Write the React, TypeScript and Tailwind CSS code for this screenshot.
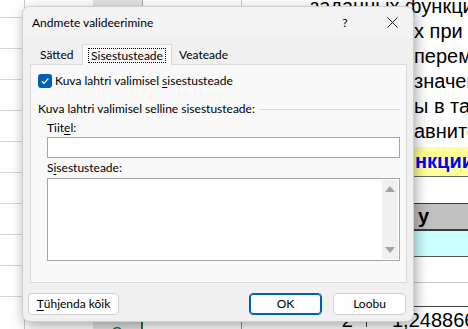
import React from 'react';

// Small access-key underline helper
const U = ({ children }: { children: React.ReactNode }) => (
    <span className="underline underline-offset-2">{children}</span>
);

const UpArrow = () => (
    <svg width="10" height="6" viewBox="0 0 10 6"><path d="M0 6 L5 0 L10 6 Z" fill="#a3a3a3" /></svg>
);
const DownArrow = () => (
    <svg width="10" height="6" viewBox="0 0 10 6"><path d="M0 0 L5 6 L10 0 Z" fill="#a3a3a3" /></svg>
);

// Spreadsheet behind the dialog
const SheetBackground = () => (
    <div className="absolute inset-0 bg-white">
        {/* left gridlines */}
        <div className="absolute left-0 top-0 w-[30px] flex flex-col">
            <div className="h-[18px] border-b border-[#d6d6d6]" />
            {[...Array(9)].map((_, i) => (
                <div key={i} className="h-[31px] border-b border-[#d6d6d6]" />
            ))}
        </div>
        {/* column header strip on top */}
        <div className="absolute left-0 top-0 w-[310px] h-[8px] flex">
            <div className="w-[25px] border-r border-[#c8c8c8]" />
            <div className="w-[68px]" />
            <div className="w-[50px] bg-[#e3e3e3] border-r border-[#a8a8a8]" />
            <div className="w-[99px] border-r border-[#c8c8c8]" />
        </div>
        {/* bottom strip */}
        <div className="absolute left-0 top-[320px] w-full h-[9px] flex">
            <div className="w-[25px] border-r border-[#c8c8c8]" />
            <div className="w-[68px]" />
            <div className="w-[50px] bg-[#e3e3e3] border-r-2 border-[#217346] flex justify-center">
                <span className="text-[#217346] text-[20px] leading-[20px] mt-[4px] font-['Liberation_Sans']">8</span>
            </div>
            <div className="w-[99px] border-r border-[#8a8a8a]" />
        </div>
        {/* right column of text */}
        <div className="absolute left-[310px] top-[-6px] w-[170px] flex flex-col font-['Liberation_Sans'] text-[20px] text-black">
            <div className="h-[25px] leading-[25px] whitespace-nowrap">заданных функций</div>
            <div className="h-[25px] leading-[25px] whitespace-nowrap pl-[104px]">х при <span className="text-[#e8a33a]">р</span></div>
            <div className="h-[25px] leading-[25px] whitespace-nowrap pl-[104px]">перем</div>
            <div className="h-[25px] leading-[25px] whitespace-nowrap pl-[104px]">значен</div>
            <div className="h-[25px] leading-[25px] whitespace-nowrap pl-[104px]">ы в та</div>
            <div className="h-[25px] leading-[25px] whitespace-nowrap pl-[104px]">авните</div>
            <div className="h-[3px]" />
            <div className="h-[30px] bg-[#ffff99] border-b border-[#666] leading-[29px] whitespace-nowrap pl-[105px] font-bold text-[#0000ff]">нкции</div>
            <div className="h-[26px]" />
            <div className="h-[28px] bg-[#c0c0c0] border-t border-b-2 border-[#3a3a3a] leading-[25px] pl-[108px] font-bold">у</div>
            <div className="h-[26px] bg-[#ccffff] border-b border-[#555]" />
            <div className="h-[26px] border-b border-[#c8c8c8]" />
            <div className="h-[24px] border-b border-[#444]" />
            <div className="h-[30px] flex leading-[26px]">
                <div className="w-[50px] text-right pr-[7px]">-2</div>
                <div className="w-[7px] border-r border-[#444] h-[20px]" />
                <div className="pl-[25px] whitespace-nowrap">1,248866</div>
            </div>
        </div>
    </div>
);

const Button = ({ children, primary = false, className = '' }: { children: React.ReactNode; primary?: boolean; className?: string }) => (
    <div
        className={`h-[22px] rounded-[4px] bg-[#fdfdfd] flex items-center justify-center text-[12px] ${primary ? 'border border-[#005fb8] shadow-[inset_0_0_0_1px_#005fb8]' : 'border border-[#d1d1d1]'} ${className}`}
    >
        {children}
    </div>
);

export default function App() {
    return (
        <div className="relative w-[468px] h-[329px] overflow-hidden">
            <SheetBackground />

            {/* Data validation dialog */}
            <div className="absolute left-[22px] top-[6px] w-[392px] h-[316px] rounded-[8px] bg-[#f0f0f0] border border-[#cfcfcf] shadow-[2px_4px_14px_rgba(0,0,0,0.35)] font-['Lato'] text-[12px] text-black flex flex-col">
                {/* title bar */}
                <div className="h-[31px] flex items-center pl-[9px] pr-[12px] bg-[#f3f3f3] rounded-t-[8px]">
                    <span className="flex-1">Andmete valideerimine</span>
                    <span className="w-[12px] text-center mr-[36px]">?</span>
                    <svg width="11" height="11" viewBox="0 0 11 11" className="mr-[3px]">
                        <path d="M0.5 0.5 L10.5 10.5 M10.5 0.5 L0.5 10.5" stroke="#1a1a1a" strokeWidth="1" />
                    </svg>
                </div>

                {/* tabs */}
                <div className="mt-[5px] ml-[7px] flex items-end h-[21px]">
                    <div className="h-[18px] w-[52px] pl-[10px] flex items-center">Sätted</div>
                    <div className="h-[21px] w-[90px] bg-[#f9f9f9] border border-b-0 border-[#d9d9d9] flex items-center justify-center relative z-10 -mb-px">
                        <span className="border border-dotted border-black px-[2px] leading-[13px]">Sisestusteade</span>
                    </div>
                    <div className="h-[18px] pl-[7px] flex items-center">Veateade</div>
                </div>

                {/* tab panel */}
                <div className="ml-[7px] w-[377px] h-[219px] bg-[#f9f9f9] border border-[#d9d9d9] flex flex-col">
                    <div className="mt-[9px] ml-[7px] flex items-center h-[14px]">
                        <div className="w-[14px] h-[14px] rounded-[3px] bg-[#005fb8] flex items-center justify-center">
                            <svg width="10" height="10" viewBox="0 0 10 10">
                                <path d="M1.8 5.2 L4 7.3 L8.3 2.7" fill="none" stroke="white" strokeWidth="1.2" />
                            </svg>
                        </div>
                        <span className="ml-[3px]">Kuva lahtri valimisel <U>s</U>isestusteade</span>
                    </div>

                    <div className="mt-[13px] ml-[7px] mr-[6px] flex items-center h-[16px]">
                        <span className="whitespace-nowrap">Kuva lahtri valimisel selline sisestusteade:</span>
                        <div className="flex-1 ml-[4px] border-t border-[#d9d9d9]" />
                    </div>

                    <div className="mt-[3px] ml-[16px] h-[16px] leading-[16px]">Tiit<U>e</U>l:</div>
                    <div className="mt-[1px] ml-[16px] w-[353px] h-[21px] bg-white border border-[#a6a6a6]" />

                    <div className="mt-[2px] ml-[16px] h-[16px] leading-[16px]">S<U>i</U>sestusteade:</div>
                    <div className="mt-[2px] ml-[16px] w-[353px] h-[83px] bg-white border border-[#a6a6a6] flex justify-end">
                        <div className="w-[16px] mt-[1px] mb-[1px] mr-[1px] bg-[#f0f0f0] flex flex-col items-center justify-between py-[6px]">
                            <UpArrow />
                            <DownArrow />
                        </div>
                    </div>
                </div>

                {/* footer buttons */}
                <div className="mt-[10px] ml-[5px] mr-[7px] flex items-center">
                    <Button className="w-[91px]"><U>T</U>ühjenda kõik</Button>
                    <div className="flex-1" />
                    <Button primary className="w-[73px]">OK</Button>
                    <Button className="w-[73px] ml-[11px]">Loobu</Button>
                </div>
            </div>
        </div>
    );
}
